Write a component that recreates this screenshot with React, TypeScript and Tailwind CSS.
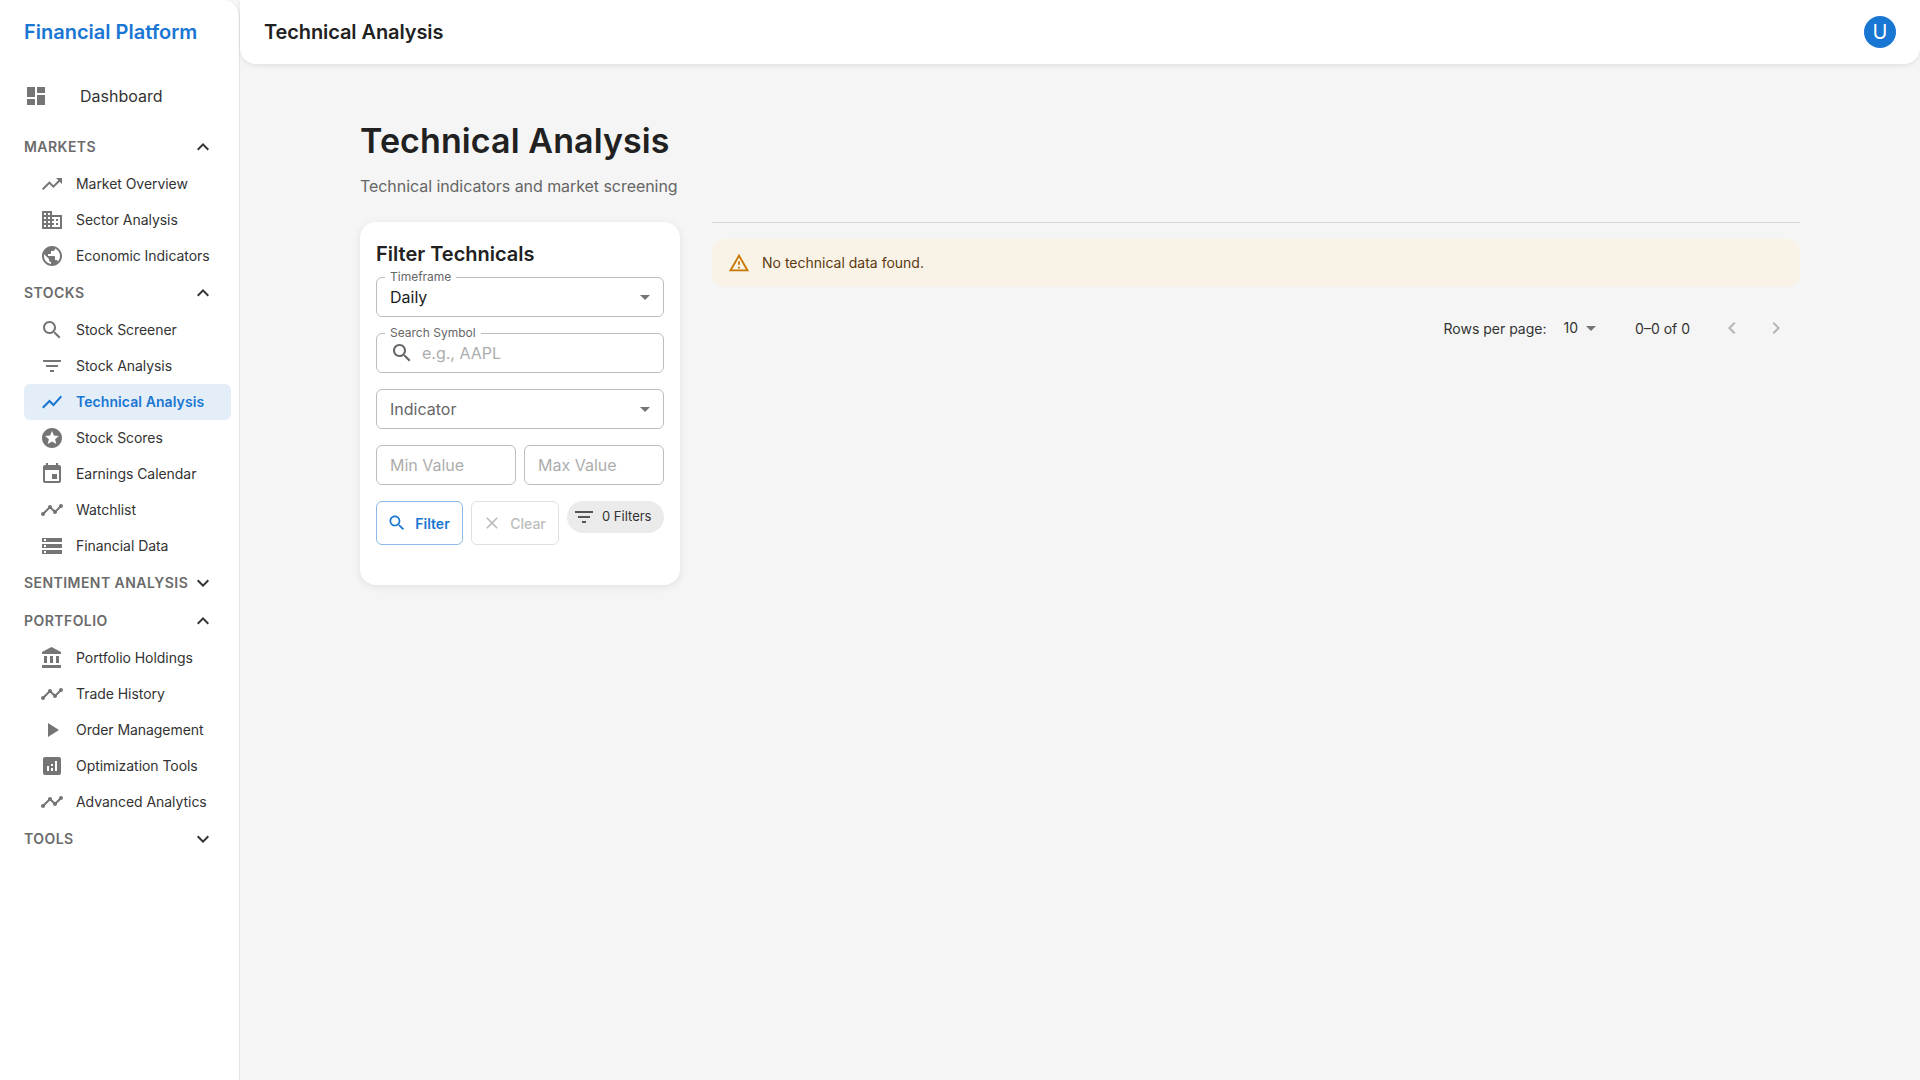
const paths = {
  dashboard: "M3 13h8V3H3v10zm0 8h8v-6H3v6zm10 0h8V11h-8v10zm0-18v6h8V3h-8z",
  trendingUp: "M16 6l2.29 2.29-4.88 4.88-4-4L2 16.59 3.41 18l6-6 4 4 6.3-6.29L22 12V6z",
  business: "M12 7V3H2v18h20V7H12zM6 19H4v-2h2v2zm0-4H4v-2h2v2zm0-4H4V9h2v2zm0-4H4V5h2v2zm4 12H8v-2h2v2zm0-4H8v-2h2v2zm0-4H8V9h2v2zm0-4H8V5h2v2zm10 12h-8v-2h2v-2h-2v-2h2v-2h-2V9h8v10zm-2-8h-2v2h2v-2zm0 4h-2v2h2v-2z",
  publicGlobe: "M12 2C6.48 2 2 6.48 2 12s4.48 10 10 10 10-4.48 10-10S17.52 2 12 2zm-1 17.93c-3.95-.49-7-3.85-7-7.93 0-.62.08-1.21.21-1.79L9 15v1c0 1.1.9 2 2 2v1.93zm6.9-2.54c-.26-.81-1-1.39-1.9-1.39h-1v-3c0-.55-.45-1-1-1H8v-2h2c.55 0 1-.45 1-1V7h2c1.1 0 2-.9 2-2v-.41c2.93 1.19 5 4.06 5 7.41 0 2.08-.8 3.97-2.1 5.39z",
  search: "M15.5 14h-.79l-.28-.27C15.41 12.59 16 11.11 16 9.5 16 5.91 13.09 3 9.5 3S3 5.91 3 9.5 5.91 16 9.5 16c1.61 0 3.09-.59 4.23-1.57l.27.28v.79l5 4.99L20.49 19l-4.99-5zm-6 0C7.01 14 5 11.99 5 9.5S7.01 5 9.5 5 14 7.01 14 9.5 11.99 14 9.5 14z",
  filterList: "M10 18h4v-2h-4v2zM3 6v2h18V6H3zm3 7h12v-2H6v2z",
  showChart: "M3.5 18.49l6-6.01 4 4L22 6.92l-1.41-1.41-7.09 7.97-4-4L2 16.99z",
  stars: "M11.99 2C6.47 2 2 6.48 2 12s4.47 10 9.99 10C17.52 22 22 17.52 22 12S17.52 2 11.99 2zm4.24 16L12 15.45 7.77 18l1.12-4.81-3.73-3.23 4.92-.42L12 5l1.92 4.53 4.92.42-3.73 3.23L16.23 18z",
  event: "M17 12h-5v5h5v-5zM16 1v2H8V1H6v2H5c-1.11 0-1.99.9-1.99 2L3 19c0 1.1.89 2 2 2h14c1.1 0 2-.9 2-2V5c0-1.1-.9-2-2-2h-1V1h-2zm3 18H5V8h14v11z",
  timeline: "M23 8c0 1.1-.9 2-2 2-.18 0-.35-.02-.51-.07l-3.56 3.55c.05.16.07.34.07.52 0 1.1-.9 2-2 2s-2-.9-2-2c0-.18.02-.36.07-.52l-2.55-2.55c-.16.05-.34.07-.52.07s-.36-.02-.52-.07l-4.55 4.56c.05.16.07.33.07.51 0 1.1-.9 2-2 2s-2-.9-2-2 .9-2 2-2c.18 0 .35.02.51.07l4.56-4.55C8.02 9.36 8 9.18 8 9c0-1.1.9-2 2-2s2 .9 2 2c0 .18-.02.36-.07.52l2.55 2.55c.16-.05.34-.07.52-.07s.36.02.52.07l3.55-3.56C19.02 8.35 19 8.18 19 8c0-1.1.9-2 2-2s2 .9 2 2z",
  storage: "M2 20h20v-4H2v4zm2-3h2v2H4v-2zM2 4v4h20V4H2zm4 3H4V5h2v2zm-4 7h20v-4H2v4zm2-3h2v2H4v-2z",
  bank: "M4 10v7h3v-7H4zm6 0v7h3v-7h-3zM2 22h19v-3H2v3zm14-12v7h3v-7h-3zm-4.5-9L2 6v2h19V6l-9.5-5z",
  play: "M8 5v14l11-7z",
  analytics: "M19 3H5c-1.1 0-2 .9-2 2v14c0 1.1.9 2 2 2h14c1.1 0 2-.9 2-2V5c0-1.1-.9-2-2-2zM9 17H7v-5h2v5zm4 0h-2v-3h2v3zm0-5h-2v-2h2v2zm4 5h-2V7h2v10z",
  expandLess: "M12 8l-6 6 1.41 1.41L12 10.83l4.59 4.58L18 14z",
  expandMore: "M16.59 8.59L12 13.17 7.41 8.59 6 10l6 6 6-6z",
  dropDown: "M7 10l5 5 5-5z",
  warning: "M12 5.99 19.53 19H4.47L12 5.99M12 2 1 21h22L12 2zm1 14h-2v2h2v-2zm0-6h-2v4h2v-4z",
  clear: "M19 6.41L17.59 5 12 10.59 6.41 5 5 6.41 10.59 12 5 17.59 6.41 19 12 13.41 17.59 19 19 17.59 13.41 12z",
  chevronLeft: "M15.41 7.41L14 6l-6 6 6 6 1.41-1.41L10.83 12z",
  chevronRight: "M10 6L8.59 7.41 13.17 12l-4.58 4.59L10 18l6-6z",
};

function Icon({ d, size = 24, className = "" }: { d: string; size?: number; className?: string }) {
  return (
    <svg width={size} height={size} viewBox="0 0 24 24" fill="currentColor" className={`shrink-0 ${className}`} aria-hidden="true">
      <path d={d} />
    </svg>
  );
}

interface NavSection {
  title: string;
  open: boolean;
  items: { label: string; icon: string; active?: boolean }[];
}

const sections: NavSection[] = [
  {
    title: "Markets",
    open: true,
    items: [
      { label: "Market Overview", icon: paths.trendingUp },
      { label: "Sector Analysis", icon: paths.business },
      { label: "Economic Indicators", icon: paths.publicGlobe },
    ],
  },
  {
    title: "Stocks",
    open: true,
    items: [
      { label: "Stock Screener", icon: paths.search },
      { label: "Stock Analysis", icon: paths.filterList },
      { label: "Technical Analysis", icon: paths.showChart, active: true },
      { label: "Stock Scores", icon: paths.stars },
      { label: "Earnings Calendar", icon: paths.event },
      { label: "Watchlist", icon: paths.timeline },
      { label: "Financial Data", icon: paths.storage },
    ],
  },
  { title: "Sentiment Analysis", open: false, items: [] },
  {
    title: "Portfolio",
    open: true,
    items: [
      { label: "Portfolio Holdings", icon: paths.bank },
      { label: "Trade History", icon: paths.timeline },
      { label: "Order Management", icon: paths.play },
      { label: "Optimization Tools", icon: paths.analytics },
      { label: "Advanced Analytics", icon: paths.timeline },
    ],
  },
  { title: "Tools", open: false, items: [] },
];

function Sidebar() {
  return (
    <aside className="w-[240px] shrink-0 bg-white border-r border-[#e4e4e4] rounded-tr-2xl">
      <div className="h-16 pl-6 flex items-center text-[20px] font-semibold text-[#1976d2]">Financial Platform</div>
      <div className="h-12 pl-6 my-2 flex items-center gap-8 text-[#333] text-[16px]">
        <Icon d={paths.dashboard} className="text-[#757575]" />
        <span>Dashboard</span>
      </div>
      {sections.map((section) => (
        <div key={section.title}>
          <div className="h-[38px] pl-6 w-[215px] flex items-center justify-between text-[14px] font-semibold tracking-[0.45px] uppercase text-[#6b6b6b]">
            <span className="whitespace-nowrap pb-[2px]">{section.title}</span>
            <Icon d={section.open ? paths.expandLess : paths.expandMore} className="text-[#333]" />
          </div>
          {section.items.map((item) => (
            <div
              key={item.label}
              className={`h-9 ml-6 mr-2 pl-4 flex items-center gap-3 rounded-md text-[14px] ${
                item.active ? "bg-[#e3eef9] text-[#1976d2] font-semibold tracking-[0.08px]" : "text-[#333] tracking-[-0.05px]"
              }`}
            >
              <Icon d={item.icon} className={item.active ? "text-[#1976d2]" : "text-[#757575]"} />
              <span className="pb-[2px]">{item.label}</span>
            </div>
          ))}
        </div>
      ))}
    </aside>
  );
}

function Field({ label, children, className = "" }: { label?: string; children: React.ReactNode; className?: string }) {
  return (
    <div className={`relative h-10 border border-[#bdbdbd] rounded-md flex items-center px-[13px] ${className}`}>
      {label && (
        <span className="absolute left-2 -top-[9px] bg-white px-[5px] text-[12px] leading-4 text-[#666]">{label}</span>
      )}
      {children}
    </div>
  );
}

function FilterCard() {
  return (
    <div className="w-[320px] h-[363px] shrink-0 bg-white rounded-2xl p-4 shadow-[0_2px_8px_rgba(0,0,0,0.08)]">
      <h2 className="text-[20px] leading-[24px] font-semibold text-[#212121] mt-[4px] mb-[11px]">Filter Technicals</h2>
      <div className="flex flex-col gap-4">
        <Field label="Timeframe">
          <span className="flex-1 text-[16px] text-[#212121]">Daily</span>
          <Icon d={paths.dropDown} className="text-[#757575] -mr-[7px]" />
        </Field>
        <Field label="Search Symbol">
          <Icon d={paths.search} className="text-[#666]" />
          <input
            placeholder="e.g., AAPL"
            className="ml-2 flex-1 min-w-0 text-[16px] outline-none placeholder:text-[#adadad] text-[#212121]"
          />
        </Field>
        <Field>
          <span className="flex-1 text-[16px] text-[#666]">Indicator</span>
          <Icon d={paths.dropDown} className="text-[#757575] -mr-[7px]" />
        </Field>
        <div className="flex gap-2">
          <Field className="flex-1">
            <input placeholder="Min Value" className="w-full text-[16px] outline-none placeholder:text-[#adadad]" />
          </Field>
          <Field className="flex-1">
            <input placeholder="Max Value" className="w-full text-[16px] outline-none placeholder:text-[#adadad]" />
          </Field>
        </div>
        <div className="flex gap-2 items-start">
          <button type="button" className="h-11 w-[87px] pr-[2px] flex items-center justify-center gap-2 rounded-md border border-[#8cbae8] text-[#1976d2] text-[14px] font-semibold">
            <Icon d={paths.search} size={20} />
            Filter
          </button>
          <button type="button" className="h-11 w-[88px] pr-[2px] flex items-center justify-center gap-2 rounded-md border border-[#e0e0e0] text-[#bdbdbd] text-[14px] font-medium">
            <Icon d={paths.clear} size={20} />
            Clear
          </button>
          <div className="h-8 w-[97px] pl-[5px] flex items-center gap-[6px] rounded-full bg-[#ebebeb] text-[13px] text-[#333]">
            <Icon d={paths.filterList} className="text-[#555]" />
            0 Filters
          </div>
        </div>
      </div>
    </div>
  );
}

export default function App() {
  return (
    <div className="flex h-screen bg-[#f5f5f5] overflow-hidden font-['Inter',sans-serif]">
      <Sidebar />
      <div className="flex-1 min-w-0 flex flex-col">
        <header className="h-16 shrink-0 bg-white rounded-b-2xl shadow-[0_2px_4px_rgba(0,0,0,0.08)] flex items-center justify-between pl-6 pr-6">
          <span className="text-[20px] font-semibold tracking-[-0.1px] text-[#212121]">Technical Analysis</span>
          <div className="w-8 h-8 rounded-full bg-[#1976d2] text-white text-[20px] flex items-center justify-center">U</div>
        </header>
        <main className="px-[120px] pt-[56px]">
          <h1 className="text-[34px] leading-[41px] font-semibold tracking-[0.1px] text-[#212121]">Technical Analysis</h1>
          <p className="mt-[13px] text-[16px] leading-6 tracking-[-0.06px] text-[#666]">Technical indicators and market screening</p>
          <div className="mt-6 flex gap-8">
            <FilterCard />
            <div className="flex-1 min-w-0">
              <div className="border-t border-[#d6d6d6]" />
              <div className="mt-4 h-12 pb-px rounded-xl bg-[#f9f2e7] flex items-center pl-4 gap-3 text-[14px] text-[#5c3a10]">
                <Icon d={paths.warning} size={22} className="text-[#c77700]" />
                <span>No technical data found.</span>
              </div>
              <div className="mt-5 h-[42px] pr-1 flex items-center justify-end text-[14px] text-[#333]">
                <span>Rows per page:</span>
                <span className="ml-[17px] -translate-y-px">10</span>
                <Icon d={paths.dropDown} className="text-[#757575] ml-px" />
                <span className="ml-8">0–0 of 0</span>
                <div className="ml-[22px] flex gap-1 text-[#b5b5b5]">
                  <span className="w-10 flex justify-center"><Icon d={paths.chevronLeft} /></span>
                  <span className="w-10 flex justify-center"><Icon d={paths.chevronRight} /></span>
                </div>
              </div>
            </div>
          </div>
        </main>
      </div>
    </div>
  );
}
